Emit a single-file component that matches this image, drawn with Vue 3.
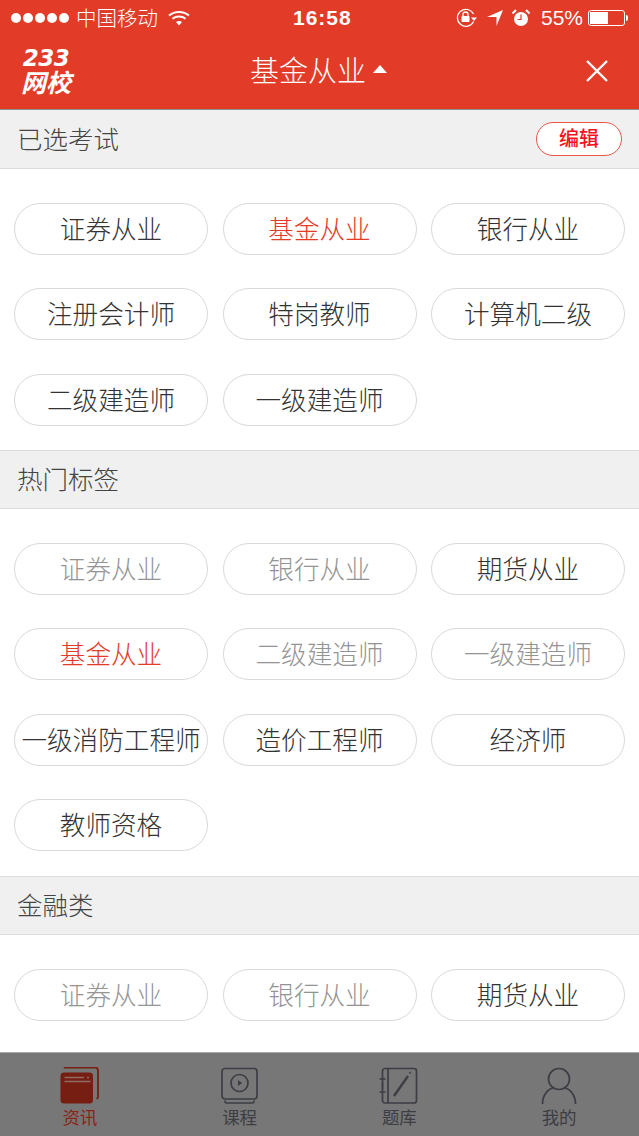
<script setup>
const sections = [
  {
    title: "已选考试",
    edit: true,
    tags: [
      { name: "证券从业" },
      { name: "基金从业", state: "on" },
      { name: "银行从业" },
      { name: "注册会计师" },
      { name: "特岗教师" },
      { name: "计算机二级" },
      { name: "二级建造师" },
      { name: "一级建造师" },
    ],
  },
  {
    title: "热门标签",
    tags: [
      { name: "证券从业", state: "off" },
      { name: "银行从业", state: "off" },
      { name: "期货从业" },
      { name: "基金从业", state: "on" },
      { name: "二级建造师", state: "off" },
      { name: "一级建造师", state: "off" },
      { name: "一级消防工程师" },
      { name: "造价工程师" },
      { name: "经济师" },
      { name: "教师资格" },
    ],
  },
  {
    title: "金融类",
    tags: [
      { name: "证券从业", state: "off" },
      { name: "银行从业", state: "off" },
      { name: "期货从业" },
    ],
  },
];
</script>

<template>
  <div class="page">
    <div class="top">
      <!-- STATUS BAR -->
      <div class="status">
        <div class="status__left">
          <div class="dots">
            <i v-for="n in 5" :key="n"></i>
          </div>
          <span class="status__carrier">中国移动</span>
          <svg class="wifi" width="22" height="16" viewBox="0 0 22 16">
            <path d="M1 5.500C6.500.7 15.500.7 21 5.500" fill="none" stroke="#fff" stroke-width="2" />
            <path d="M4.500 8.800C8 5.800 14 5.800 17.500 8.800" fill="none" stroke="#fff" stroke-width="2" />
            <path d="M8 12C9.800 10.600 12.200 10.600 14 12L11 15.500Z" fill="#fff" />
          </svg>
        </div>
        <div class="status__time">16:58</div>
        <div class="status__right">
          <svg width="22" height="20" viewBox="0 0 22 20">
            <path d="M17.600 13.500A8.500 8.500 0 1 1 17.500 6" fill="none" stroke="#fff" stroke-width="1.200" />
            <path d="M15 9.500h6l-3 3.500z" fill="#fff" />
            <path d="M7 8V6.500a2.500 2.500 0 0 1 5 0V8" fill="none" stroke="#fff" stroke-width="1.300" />
            <rect x="5.500" y="8" width="8" height="6" rx="1" fill="#fff" />
          </svg>
          <svg class="arrow" width="16" height="16" viewBox="0 0 16 16">
            <path d="M16 0L9.500 16V7L0 7Z" fill="#fff" />
          </svg>
          <svg class="alarm" width="18" height="18" viewBox="0 0 18 18">
            <circle cx="9" cy="10" r="7" fill="#fff" />
            <path d="M9 5.500V10.500H5.500" fill="none" stroke="#e23b28" stroke-width="1.200" />
            <path d="M0.500 4.500L4 1M17.500 4.500L14 1" fill="none" stroke="#fff" stroke-width="2" />
          </svg>
          <span class="status__pct">55%</span>
          <div class="battery">
            <div class="battery__body"><div class="battery__fill"></div></div>
            <div class="battery__tip"></div>
          </div>
        </div>
      </div>

      <!-- NAV -->
      <header class="nav">
        <div class="logo">
          <div class="logo__num">233</div>
          <div class="logo__name">网校</div>
        </div>
        <div class="nav__title">
          <span>基金从业</span>
          <i class="nav__caret"></i>
        </div>
        <svg class="nav__close" width="22" height="22" viewBox="0 0 22 22">
          <path d="M1 1L21 21M21 1L1 21" stroke="#fff" stroke-width="2.400" fill="none" />
        </svg>
      </header>
    </div>

    <!-- TAG SECTIONS -->
    <main class="content">
      <section v-for="sec in sections" :key="sec.title">
        <div class="sec-head">
          <span>{{ sec.title }}</span>
          <button v-if="sec.edit" class="edit-btn">编辑</button>
        </div>
        <div class="tags">
          <div v-for="tag in sec.tags" :key="tag.name" class="tag" :class="tag.state">{{ tag.name }}</div>
        </div>
      </section>
    </main>

    <!-- TAB BAR -->
    <footer class="tabs">
      <div class="tab tab--active">
        <svg width="40" height="38" viewBox="0 0 40 38">
          <path d="M4.500 1.500C4.500 .8 5 .5 6 .5H35C37 .5 38 1.500 38 3.500V30C38 31 37.500 31.500 36.500 32" fill="none" stroke="#771e12" stroke-width="1.800" />
          <rect x="0.500" y="5.500" width="32.500" height="31" rx="3.500" fill="#771e12" />
          <path d="M4.500 10.500H24M4.500 14.500H30.500" stroke="#8f6b65" stroke-width="1.300" fill="none" />
          <circle cx="28" cy="10.500" r="1" fill="#8f6b65" />
        </svg>
        <span>资讯</span>
      </div>
      <div class="tab">
        <svg width="40" height="38" viewBox="0 0 40 38">
          <rect x="2" y="1.500" width="35" height="30.500" rx="3" fill="none" stroke="#3c3e44" stroke-width="1.700" />
          <circle cx="19.500" cy="16" r="8.500" fill="none" stroke="#3c3e44" stroke-width="1.700" />
          <path d="M18 13L22 16L18 19Z" fill="#3c3e44" />
          <path d="M5 33.500V34.500C5 35.500 5.500 36 6.500 36H32.500C33.500 36 34 35.500 34 34.500V33.500" fill="none" stroke="#3c3e44" stroke-width="1.700" />
        </svg>
        <span>课程</span>
      </div>
      <div class="tab">
        <svg width="40" height="38" viewBox="0 0 40 38">
          <rect x="3.500" y="1.500" width="34" height="34.500" rx="2.500" fill="none" stroke="#3c3e44" stroke-width="1.700" />
          <path d="M9 1.500V36" stroke="#3c3e44" stroke-width="1.700" fill="none" />
          <path d="M.5 12H6.500M.5 25H6.500M3.500 15V22" stroke="#3c3e44" stroke-width="1.500" fill="none" />
          <path d="M15 29L29 9" stroke="#3c3e44" stroke-width="2.400" fill="none" />
          <path d="M30.500 6.500L31.500 5" stroke="#3c3e44" stroke-width="1.500" fill="none" />
        </svg>
        <span>题库</span>
      </div>
      <div class="tab">
        <svg width="40" height="38" viewBox="0 0 40 38">
          <circle cx="20" cy="12" r="10.500" fill="none" stroke="#3c3e44" stroke-width="1.700" />
          <path d="M3.500 37C3.500 27 10 21.500 14 21M36.500 37C36.500 27 30 21.500 26 21" fill="none" stroke="#3c3e44" stroke-width="1.700" />
        </svg>
        <span>我的</span>
      </div>
    </footer>
  </div>
</template>

<style scoped>
.page {
  width: 639px;
  height: 1136px;
  overflow: hidden;
  display: flex;
  flex-direction: column;
  background-color: #fff;
  font-family: "Liberation Sans", "Noto Sans CJK SC", sans-serif;
  color: #333;
}

.top {
  height: 110px;
  flex-shrink: 0;
  background-color: #e23b28;
  border-bottom: 1px solid #8f8f8f;
  box-sizing: border-box;
  color: #fff;
}

.status {
  height: 36px;
  display: flex;
  align-items: center;
  justify-content: space-between;
  position: relative;
  padding: 0 11px;
  font-size: 21px;
}

.status__left,
.status__right {
  display: flex;
  align-items: center;
}

.dots {
  display: flex;
  gap: 2px;
  margin-right: 7px;
}

.dots i {
  width: 10px;
  height: 10px;
  border-radius: 50%;
  background-color: #fff;
}

.status__carrier {
  font-size: 20.500px;
  font-weight: 300;
  margin-bottom: 3px;
}

.wifi {
  margin-left: 10px;
}

.status__time {
  position: absolute;
  left: 293px;
  font-size: 21px;
  font-weight: 700;
  letter-spacing: 1px;
}

.status__right svg:first-child {
  margin-right: 1px;
}

.arrow {
  margin-left: 8px;
}

.alarm {
  margin-left: 9px;
}

.status__pct {
  margin-left: 11px;
}

.battery {
  display: flex;
  align-items: center;
  margin-left: 5px;
}

.battery__body {
  width: 37px;
  height: 16px;
  box-sizing: border-box;
  border: 1px solid #fff;
  border-radius: 3px;
  padding: 1px;
}

.battery__fill {
  width: 55%;
  height: 100%;
  background-color: #fff;
}

.battery__tip {
  width: 2px;
  height: 6px;
  margin-left: 1px;
  background-color: #fff;
  border-radius: 0 2px 2px 0;
}

.nav {
  height: 73px;
  position: relative;
  display: flex;
  align-items: center;
  justify-content: center;
}

.logo {
  position: absolute;
  left: 20px;
  top: 11px;
  width: 52px;
  text-align: center;
  font-style: italic;
  font-weight: 700;
  line-height: 1;
}

.logo__num {
  font-family: "DejaVu Sans", sans-serif;
  font-size: 23px;
  height: 23px;
  letter-spacing: -0.5px;
}

.logo__name {
  font-size: 25px;
  height: 25px;
  margin-top: 1px;
}

.nav__title {
  display: flex;
  align-items: center;
  font-size: 29px;
  font-weight: 300;
  margin-bottom: 7px;
}

.nav__caret {
  width: 0;
  height: 0;
  margin: 0 2px 0 7px;
  border-left: 7px solid transparent;
  border-right: 7px solid transparent;
  border-bottom: 8px solid #fff;
}

.nav__close {
  position: absolute;
  right: 31px;
  top: 24px;
}

.content {
  flex: 1;
  min-height: 0;
  overflow: hidden;
}

.sec-head {
  height: 59px;
  box-sizing: border-box;
  display: flex;
  align-items: center;
  justify-content: space-between;
  padding: 0 17px;
  background-color: #f0f0f0;
  border-bottom: 1px solid #dcdcdc;
  font-size: 25.500px;
  font-weight: 300;
  color: #444;
}

.sec-head span {
  margin-bottom: 4px;
}

section + section .sec-head {
  border-top: 1px solid #dcdcdc;
}

.edit-btn {
  width: 86px;
  height: 34px;
  padding: 0 0 3px;
  border: 1px solid #e8574a;
  border-radius: 17px;
  background-color: #fff;
  color: #f5121c;
  font-family: inherit;
  font-size: 20px;
  font-weight: 500;
}

.tags {
  display: grid;
  grid-template-columns: repeat(3, 194px);
  column-gap: 14.500px;
  row-gap: 33.330px;
  padding: 34px 14px 24.500px;
}

.tag {
  height: 52px;
  box-sizing: border-box;
  border: 1px solid #d9d9d9;
  border-radius: 26px;
  padding-bottom: 3px;
  display: flex;
  align-items: center;
  justify-content: center;
  font-size: 25.600px;
  font-weight: 300;
  color: #333;
  white-space: nowrap;
}

.tag.on {
  color: #e23b28;
}

.tag.off {
  color: #949494;
}

.tabs {
  height: 84px;
  flex-shrink: 0;
  box-sizing: border-box;
  display: flex;
  background-color: #777;
  border-top: 1px solid #a8a8a8;
  padding-top: 14px;
}

.tab {
  flex: 1;
  display: flex;
  flex-direction: column;
  align-items: center;
  color: #3c3e44;
  font-size: 17.500px;
  line-height: 24px;
}

.tab svg {
  display: block;
  margin-bottom: 1px;
}

.tab--active {
  color: #8a2418;
}
</style>
